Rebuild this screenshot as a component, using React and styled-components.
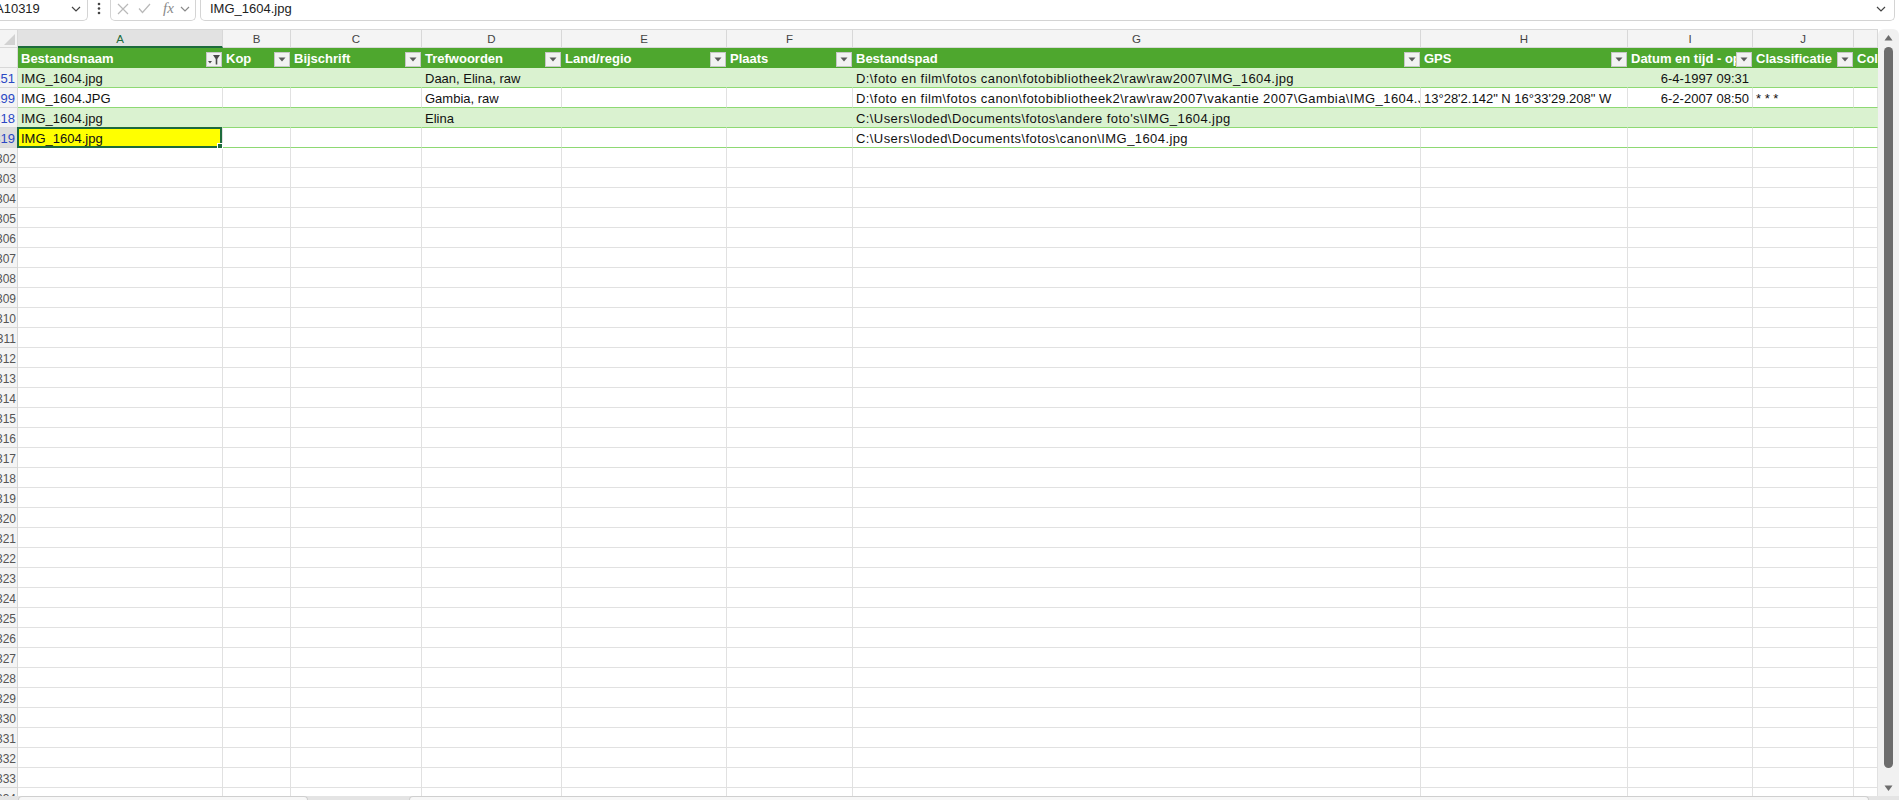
import React from 'react';
import styled, { createGlobalStyle } from 'styled-components';

const COLS = [
  { key: 'A', w: 205, title: 'Bestandsnaam', filtered: true },
  { key: 'B', w: 68, title: 'Kop' },
  { key: 'C', w: 131, title: 'Bijschrift' },
  { key: 'D', w: 140, title: 'Trefwoorden' },
  { key: 'E', w: 165, title: 'Land/regio' },
  { key: 'F', w: 126, title: 'Plaats' },
  { key: 'G', w: 568, title: 'Bestandspad', tracking: 0.42 },
  { key: 'H', w: 207, title: 'GPS' },
  { key: 'I', w: 125, title: 'Datum en tijd - opname', align: 'right' },
  { key: 'J', w: 101, title: 'Classificatie' },
  { key: 'K', w: 24, title: 'Collectie', hideLetter: true, noButton: true },
];

const TEMPLATE = `18px ${COLS.map((c) => c.w + 'px').join(' ')}`;

const TABLE_ROWS = [
  {
    num: '10251',
    band: true,
    cells: {
      A: 'IMG_1604.jpg',
      D: 'Daan, Elina, raw',
      G: 'D:\\foto en film\\fotos canon\\fotobibliotheek2\\raw\\raw2007\\IMG_1604.jpg',
      I: '6-4-1997 09:31',
    },
  },
  {
    num: '10299',
    band: false,
    cells: {
      A: 'IMG_1604.JPG',
      D: 'Gambia, raw',
      G: 'D:\\foto en film\\fotos canon\\fotobibliotheek2\\raw\\raw2007\\vakantie 2007\\Gambia\\IMG_1604.JPG',
      H: '13°28\'2.142" N 16°33\'29.208" W',
      I: '6-2-2007 08:50',
      J: '* * *',
    },
  },
  {
    num: '10318',
    band: true,
    cells: {
      A: 'IMG_1604.jpg',
      D: 'Elina',
      G: "C:\\Users\\loded\\Documents\\fotos\\andere foto's\\IMG_1604.jpg",
    },
  },
  {
    num: '10319',
    band: false,
    selected: true,
    cells: {
      A: 'IMG_1604.jpg',
      G: 'C:\\Users\\loded\\Documents\\fotos\\canon\\IMG_1604.jpg',
    },
  },
];

const EMPTY_ROWS = Array.from({ length: 33 }, (_, i) => String(10302 + i));

const GREEN = '#4ea72e';
const BAND = '#daf2d0';
const TABLE_LINE = '#8ed973';
const GRID = '#e1e1e1';
const HEAD_BG = '#f4f4f4';
const HEAD_LINE = '#d8d8d8';
const SEL = '#1d6b3c';

const Global = createGlobalStyle`
  html, body { margin: 0; padding: 0; background: #fff; overflow: hidden; }
  body { font-family: "Liberation Sans", Arial, sans-serif; }
  *, *::before, *::after { box-sizing: border-box; }
`;

const Page = styled.div`
  width: 1899px;
  height: 800px;
  display: flex;
  flex-direction: column;
  overflow: hidden;
  background: #fff;
`;

/* ---------- formula bar ---------- */

const FormulaBar = styled.div`
  flex: none;
  height: 21px;
  margin-bottom: 8px;
  display: flex;
  align-items: stretch;
  background: #fff;
  color: #222;
`;

const NameBox = styled.div`
  flex: none;
  width: 96px;
  margin-left: -8px;
  padding: 0 6px 3px 3px;
  display: flex;
  align-items: center;
  border-right: 1px solid #d4d4d4;
  border-bottom: 1px solid #d4d4d4;
  border-bottom-right-radius: 5px;
  font-size: 13px;
`;

const NameText = styled.span`
  flex: 1;
  white-space: nowrap;
`;

const DotsSlot = styled.div`
  flex: none;
  width: 22px;
  display: flex;
  align-items: center;
  justify-content: center;
  padding-bottom: 3px;
`;

const FxBox = styled.div`
  flex: none;
  width: 86px;
  display: flex;
  align-items: center;
  padding: 0 0 3px 6px;
  border-left: 1px solid #d4d4d4;
  border-right: 1px solid #d4d4d4;
  border-bottom: 1px solid #d4d4d4;
  border-radius: 0 0 5px 5px;
`;

const IconSlot = styled.span`
  display: inline-flex;
  margin-left: ${(p) => p.$ml || 0}px;
`;

const FxLabel = styled.span`
  margin-left: 12px;
  font-family: "Liberation Serif", "Times New Roman", serif;
  font-style: italic;
  font-size: 15px;
  color: #8a8a8a;
  line-height: 1;
`;

const FormulaInput = styled.div`
  flex: 1;
  margin: 0 4px;
  display: flex;
  align-items: center;
  padding: 0 8px 3px 9px;
  border-left: 1px solid #d4d4d4;
  border-right: 1px solid #d4d4d4;
  border-bottom: 1px solid #d4d4d4;
  border-radius: 0 0 5px 5px;
  font-size: 13px;
`;

const FormulaText = styled.span`
  flex: 1;
  white-space: nowrap;
`;

/* ---------- sheet ---------- */

const Workspace = styled.div`
  flex: none;
  height: 767px;
  display: flex;
  overflow: hidden;
`;

const Sheet = styled.div`
  flex: 1;
  display: flex;
  flex-direction: column;
  overflow: hidden;
`;

const GridRow = styled.div`
  flex: none;
  display: grid;
  grid-template-columns: ${TEMPLATE};
  height: ${(p) => p.$h || 20}px;
`;

const Corner = styled.div`
  background: ${HEAD_BG};
  border-top: 1px solid ${HEAD_LINE};
  border-right: 1px solid ${HEAD_LINE};
  border-bottom: 1px solid ${HEAD_LINE};
  display: flex;
  align-items: flex-end;
  justify-content: flex-end;
  padding: 0 2px 2px 0;
`;

const ColLetter = styled.div`
  background: ${(p) => (p.$active ? '#e2e2e2' : HEAD_BG)};
  border-top: 1px solid ${HEAD_LINE};
  border-right: 1px solid ${HEAD_LINE};
  border-bottom: ${(p) => (p.$active ? `2px solid ${SEL}` : `1px solid ${HEAD_LINE}`)};
  color: ${(p) => (p.$active ? SEL : '#444')};
  font-size: 11.5px;
  line-height: 16px;
  padding-top: 1px;
  text-align: center;
  overflow: hidden;
  white-space: nowrap;
`;

const RowNum = styled.div`
  background: ${(p) => (p.$active ? '#dcdcdc' : HEAD_BG)};
  border-right: 1px solid ${(p) => (p.$active ? SEL : HEAD_LINE)};
  border-bottom: 1px solid ${HEAD_LINE};
  color: ${(p) => (p.$filtered ? '#2b48c4' : '#555')};
  font-size: ${(p) => (p.$filtered ? 13 : 12)}px;
  line-height: 16px;
  padding: 3px ${(p) => (p.$filtered ? 2 : 1)}px 0 0;
  display: flex;
  justify-content: flex-end;
  overflow: hidden;
  white-space: nowrap;
`;

const HeadCell = styled.div`
  background: ${GREEN};
  color: #fff;
  font-weight: bold;
  font-size: 13px;
  display: flex;
  align-items: stretch;
  overflow: hidden;
  min-width: 0;
`;

const HeadText = styled.span`
  flex: 1;
  min-width: 0;
  overflow: hidden;
  white-space: nowrap;
  padding: 3px 0 0 3px;
  line-height: 16px;
`;

const FilterButton = styled.div`
  flex: none;
  width: 16px;
  height: 15px;
  align-self: flex-end;
  margin: 0 1px 1px 0;
  background: #f2f2f2;
  border: 1px solid #c6c6c6;
  display: flex;
  align-items: center;
  justify-content: center;
`;

const Cell = styled.div`
  position: relative;
  min-width: 0;
  background: ${(p) => p.$fill || (p.$band ? BAND : '#fff')};
  border-right: 1px solid ${(p) => (p.$band ? BAND : GRID)};
  border-bottom: 1px solid ${(p) => (p.$table ? TABLE_LINE : GRID)};
  padding: 3px 3px 0 3px;
  font-size: 13px;
  line-height: 16px;
  letter-spacing: ${(p) => p.$tracking || 0}px;
  color: #111;
  white-space: nowrap;
  overflow: ${(p) => (p.$selected ? 'visible' : 'hidden')};
  text-align: ${(p) => p.$align || 'left'};
  z-index: ${(p) => (p.$selected ? 2 : 'auto')};
`;

const SelectionFrame = styled.div`
  position: absolute;
  left: -1px;
  top: -1px;
  right: 0;
  bottom: -1px;
  border: 2px solid ${SEL};
  pointer-events: none;
`;

const FillHandle = styled.div`
  position: absolute;
  right: -3px;
  bottom: -3px;
  width: 6px;
  height: 6px;
  background: ${SEL};
  border: 1px solid #fff;
`;

/* ---------- scrollbars ---------- */

const VScroll = styled.div`
  flex: none;
  width: 21px;
  background: #f1f1f1;
  border-radius: 6px 6px 0 0;
  display: flex;
  flex-direction: column;
  align-items: center;
  padding: 5px 0 4px;
`;

const Thumb = styled.div`
  flex: 1;
  width: 9px;
  margin: 5px 0 16px;
  border-radius: 5px;
  background: #6d6d6d;
`;

const BottomBar = styled.div`
  flex: none;
  height: 4px;
  background: #e4e4e4;
  display: flex;
`;

const Pill = styled.div`
  flex: ${(p) => (p.$grow ? 1 : 'none')};
  width: ${(p) => (p.$w ? p.$w + 'px' : 'auto')};
  margin-left: ${(p) => p.$ml}px;
  margin-right: ${(p) => p.$mr || 0}px;
  background: #f7f7f7;
  border: 1px solid #cfcfcf;
  border-bottom: none;
  border-radius: 4px 4px 0 0;
`;

/* ---------- icons ---------- */

const Chevron = ({ color = '#444' }) => (
  <svg width="10" height="6" viewBox="0 0 10 6">
    <polyline points="1,1 5,5 9,1" fill="none" stroke={color} strokeWidth="1.2" />
  </svg>
);

const Dots = () => (
  <svg width="4" height="14" viewBox="0 0 4 14">
    <circle cx="2" cy="2" r="1.3" fill="#444" />
    <circle cx="2" cy="6.5" r="1.3" fill="#444" />
    <circle cx="2" cy="11" r="1.3" fill="#444" />
  </svg>
);

const Cross = () => (
  <svg width="12" height="12" viewBox="0 0 12 12">
    <path d="M1 1 L11 11 M11 1 L1 11" stroke="#b9b9b9" strokeWidth="1.2" fill="none" />
  </svg>
);

const Check = () => (
  <svg width="13" height="11" viewBox="0 0 13 11">
    <polyline points="1,5.5 4.5,9.5 12,1" fill="none" stroke="#b9b9b9" strokeWidth="1.2" />
  </svg>
);

const DropTriangle = () => (
  <svg width="8" height="5" viewBox="0 0 8 5">
    <polygon points="0.5,0.5 7.5,0.5 4,4.5" fill="#5a5a5a" />
  </svg>
);

const FunnelIcon = () => (
  <svg width="14" height="13" viewBox="0 0 14 13">
    <polygon points="1,8 5,8 3,10.5" fill="#4a4a4a" />
    <polygon points="6,2 13,2 10.3,6 10.3,11.5 8.7,11.5 8.7,6" fill="#4a4a4a" />
  </svg>
);

const CornerTriangle = () => (
  <svg width="11" height="11" viewBox="0 0 11 11">
    <polygon points="11,0 11,11 0,11" fill="#d2d2d2" />
  </svg>
);

const ArrowUp = () => (
  <svg width="9" height="8" viewBox="0 0 9 8">
    <polygon points="0.5,6.5 8.5,6.5 4.5,1" fill="#6d6d6d" />
  </svg>
);

const ArrowDown = () => (
  <svg width="9" height="8" viewBox="0 0 9 8">
    <polygon points="0.5,1.5 8.5,1.5 4.5,7" fill="#6d6d6d" />
  </svg>
);

/* ---------- app ---------- */

export default function App() {
  return (
    <>
      <Global />
      <Page>
        <FormulaBar>
          <NameBox>
            <NameText>A10319</NameText>
            <Chevron />
          </NameBox>
          <DotsSlot>
            <Dots />
          </DotsSlot>
          <FxBox>
            <IconSlot>
              <Cross />
            </IconSlot>
            <IconSlot $ml={9}>
              <Check />
            </IconSlot>
            <FxLabel>fx</FxLabel>
            <IconSlot $ml={6}>
              <Chevron color="#8a8a8a" />
            </IconSlot>
          </FxBox>
          <FormulaInput>
            <FormulaText>IMG_1604.jpg</FormulaText>
            <Chevron />
          </FormulaInput>
        </FormulaBar>

        <Workspace>
          <Sheet>
            <GridRow $h={19}>
              <Corner>
                <CornerTriangle />
              </Corner>
              {COLS.map((c) => (
                <ColLetter key={c.key} $active={c.key === 'A'}>
                  {c.hideLetter ? '' : c.key}
                </ColLetter>
              ))}
            </GridRow>

            <GridRow>
              <RowNum>&nbsp;</RowNum>
              {COLS.map((c) => (
                <HeadCell key={c.key}>
                  <HeadText>{c.title}</HeadText>
                  {!c.noButton && (
                    <FilterButton>{c.filtered ? <FunnelIcon /> : <DropTriangle />}</FilterButton>
                  )}
                </HeadCell>
              ))}
            </GridRow>

            {TABLE_ROWS.map((r) => (
              <GridRow key={r.num}>
                <RowNum $filtered $active={r.selected}>
                  {r.num}
                </RowNum>
                {COLS.map((c) => {
                  const isSel = r.selected && c.key === 'A';
                  return (
                    <Cell
                      key={c.key}
                      $table
                      $band={r.band}
                      $align={c.align}
                      $tracking={c.tracking}
                      $selected={isSel}
                      $fill={isSel ? '#ffff00' : undefined}
                    >
                      {r.cells[c.key] || ''}
                      {isSel && (
                        <SelectionFrame>
                          <FillHandle />
                        </SelectionFrame>
                      )}
                    </Cell>
                  );
                })}
              </GridRow>
            ))}

            {EMPTY_ROWS.map((n) => (
              <GridRow key={n}>
                <RowNum>{n}</RowNum>
                {COLS.map((c) => (
                  <Cell key={c.key} />
                ))}
              </GridRow>
            ))}
          </Sheet>

          <VScroll>
            <ArrowUp />
            <Thumb />
            <ArrowDown />
          </VScroll>
        </Workspace>

        <BottomBar>
          <Pill $ml={18} $w={290} />
          <Pill $ml={101} $grow $mr={30} />
        </BottomBar>
      </Page>
    </>
  );
}
